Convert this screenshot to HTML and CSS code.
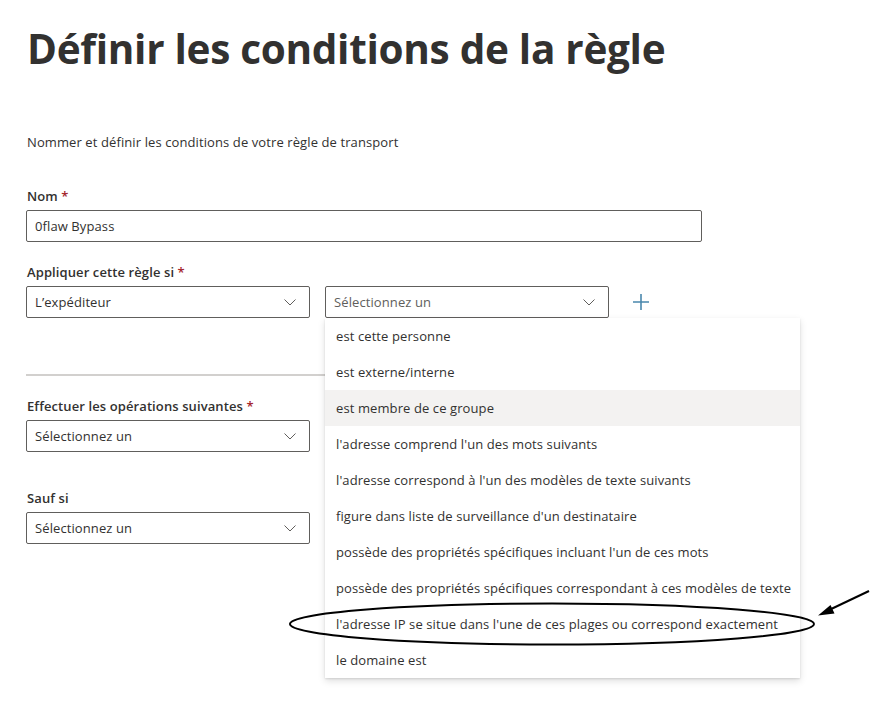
FILE: index.html
```html
<!DOCTYPE html>
<html lang="fr">
<head>
<meta charset="utf-8">
<title>Définir les conditions de la règle</title>
<link rel="stylesheet" href="styles.css">
</head>
<body>
<div class="page">
  <h1 class="title">Définir les conditions de la règle</h1>
  <p class="intro">Nommer et définir les conditions de votre règle de transport</p>

  <div class="field field-name">
    <div class="label">Nom <span class="req">*</span></div>
    <div class="input">0flaw Bypass</div>
  </div>

  <div class="field field-apply">
    <div class="label">Appliquer cette règle si <span class="req">*</span></div>
    <div class="row">
      <div class="select">
        <span class="value">L’expéditeur</span>
        <svg class="chev" width="12" height="7" viewBox="0 0 12 7"><path d="M0.5 0.5 L6 6 L11.5 0.5" fill="none" stroke="#605e5c" stroke-width="1"/></svg>
      </div>
      <div class="select-wrap">
        <div class="select open">
          <span class="value placeholder">Sélectionnez un</span>
          <svg class="chev" width="12" height="7" viewBox="0 0 12 7"><path d="M0.5 0.5 L6 6 L11.5 0.5" fill="none" stroke="#605e5c" stroke-width="1"/></svg>
        </div>
        <ul class="menu">
          <li class="item">est cette personne</li>
          <li class="item">est externe/interne</li>
          <li class="item hover">est membre de ce groupe</li>
          <li class="item">l'adresse comprend l'un des mots suivants</li>
          <li class="item">l'adresse correspond à l'un des modèles de texte suivants</li>
          <li class="item">figure dans liste de surveillance d'un destinataire</li>
          <li class="item">possède des propriétés spécifiques incluant l'un de ces mots</li>
          <li class="item">possède des propriétés spécifiques correspondant à ces modèles de texte</li>
          <li class="item">l'adresse IP se situe dans l'une de ces plages ou correspond exactement</li>
          <li class="item">le domaine est</li>
        </ul>
      </div>
      <div class="add">
        <svg width="18" height="18" viewBox="0 0 18 18"><path d="M9 1 V17 M1 9 H17" fill="none" stroke="#4a88ad" stroke-width="1.6"/></svg>
      </div>
    </div>
  </div>

  <div class="divider"></div>

  <div class="field field-do">
    <div class="label">Effectuer les opérations suivantes <span class="req">*</span></div>
    <div class="select">
      <span class="value">Sélectionnez un</span>
      <svg class="chev" width="12" height="7" viewBox="0 0 12 7"><path d="M0.5 0.5 L6 6 L11.5 0.5" fill="none" stroke="#605e5c" stroke-width="1"/></svg>
    </div>
  </div>

  <div class="field field-except">
    <div class="label">Sauf si</div>
    <div class="select">
      <span class="value">Sélectionnez un</span>
      <svg class="chev" width="12" height="7" viewBox="0 0 12 7"><path d="M0.5 0.5 L6 6 L11.5 0.5" fill="none" stroke="#605e5c" stroke-width="1"/></svg>
    </div>
  </div>
</div>

<svg class="annot" width="878" height="714" viewBox="0 0 878 714">
  <ellipse cx="552" cy="624" rx="262" ry="20.5" fill="none" stroke="#000" stroke-width="2"/>
  <line x1="869" y1="591" x2="828" y2="610.5" stroke="#000" stroke-width="2"/>
  <polygon points="818,615.5 830.5,605 834.5,613.5" fill="#000"/>
</svg>
</body>
</html>
```

FILE: styles.css
```css
html, body {
  margin: 0;
  padding: 0;
  background: #ffffff;
}

body {
  font-family: "Open Sans", "Noto Sans", "Liberation Sans", sans-serif;
  font-size: 13px;
  letter-spacing: 0.1px;
  color: #323130;
  width: 878px;
  height: 714px;
  overflow: hidden;
  position: relative;
}

.page {
  padding-left: 26px;
  width: 676px;
}

.title {
  margin: 21px 0 0 1px;
  font-size: 40.5px;
  line-height: 56px;
  font-weight: 700;
  color: #323130;
  letter-spacing: -0.3px;
  white-space: nowrap;
}

.intro {
  margin: 55px 0 0 1px;
  line-height: 20px;
}

.field-name { margin-top: 34px; }
.field-apply { margin-top: 20px; }
.field-do { margin-top: 20px; }
.field-except { margin-top: 36px; }

.label {
  font-weight: 600;
  line-height: 20px;
  margin-bottom: 4px;
  margin-left: 1px;
}

.req {
  color: #a4262c;
}

.input,
.select {
  box-sizing: border-box;
  height: 32px;
  border: 1px solid #605e5c;
  border-radius: 2px;
  padding: 0 8px;
  line-height: 30px;
  background: #fff;
}

.input {
  line-height: 31px;
}

.select {
  width: 284px;
  display: flex;
  align-items: center;
  justify-content: space-between;
}

.select .value {
  white-space: nowrap;
}

.select .placeholder {
  color: #605e5c;
}

.chev {
  display: block;
  margin-right: 5px;
}

.row {
  display: flex;
  align-items: center;
  gap: 15px;
}

.select-wrap {
  position: relative;
}

.add {
  display: flex;
  align-items: center;
  justify-content: center;
  width: 34px;
  height: 32px;
}

.add svg {
  display: block;
}

.menu {
  position: absolute;
  top: 32px;
  left: 0;
  width: 475px;
  margin: 0;
  padding: 0;
  list-style: none;
  background: #fff;
  box-shadow: 0 3.2px 7.2px rgba(0, 0, 0, 0.13), 0 0.6px 1.8px rgba(0, 0, 0, 0.11);
  z-index: 2;
}

.item {
  height: 36px;
  line-height: 36px;
  padding-left: 11px;
  white-space: nowrap;
}

.item.hover {
  background: #f3f2f1;
}

.divider {
  margin-top: 56px;
  height: 2px;
  background: #d2d0ce;
}

.annot {
  position: absolute;
  left: 0;
  top: 0;
  z-index: 5;
  pointer-events: none;
}
```
